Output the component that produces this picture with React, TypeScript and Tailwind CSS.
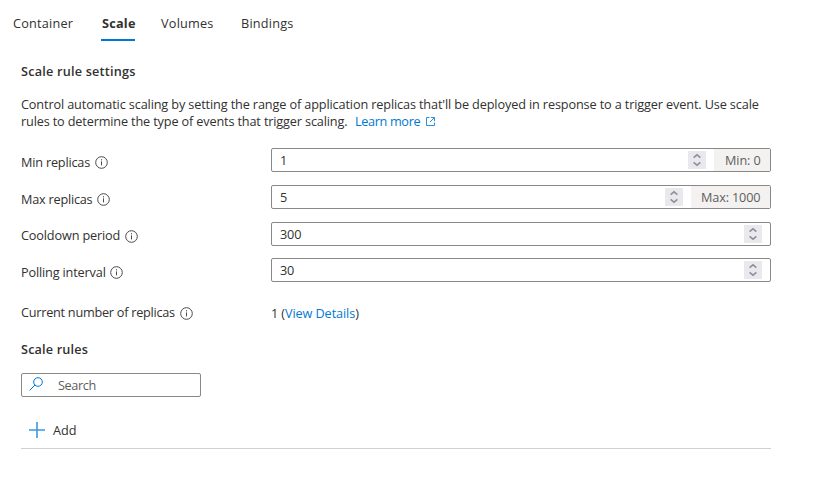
import type { ReactNode } from "react";

function InfoIcon({ className = "" }: { className?: string }) {
  return (
    <svg className={`h-[13px] w-[13px] shrink-0 ${className}`} viewBox="0 0 13 13" fill="none">
      <circle cx="6.5" cy="6.5" r="5.8" stroke="#4a4948" strokeWidth="1" />
      <path d="M6.5 5.4V9.4M6.5 3.2V4.4" stroke="#4a4948" strokeWidth="1" />
    </svg>
  );
}

function Spinner() {
  return (
    <svg className="h-[18px] w-[18px] shrink-0 bg-[#e9e9ed]" viewBox="0 0 18 18" fill="none">
      <path d="M5.6 6.7L9 3.9L12.4 6.7M5.6 11.3L9 14.1L12.4 11.3" stroke="#8f8f9d" strokeWidth="1.6" />
    </svg>
  );
}

type FieldProps = {
  label: string;
  labelClass: string;
  value: string;
  suffix?: ReactNode;
  gap?: string;
};

function Field({ label, labelClass, value, suffix, gap = "mb-[13px]" }: FieldProps) {
  return (
    <div className={`flex h-6 ${gap}`}>
      <div className="flex w-[250px] items-center pt-[5px]">
        <span className={`whitespace-nowrap ${labelClass}`}>{label}</span>
        <InfoIcon />
      </div>
      <div className="flex h-6 w-[500px] items-center rounded-[2px] border border-[#8a8886] pl-2">
        <span className="flex-1 pt-px tracking-[-0.15px]">{value}</span>
        <Spinner />
        {suffix ?? <span className="w-2" />}
      </div>
    </div>
  );
}

export default function App() {
  return (
    <main className="h-[485px] w-[821px] overflow-hidden bg-white font-['Open_Sans','Noto_Sans',sans-serif] text-[12.7px] leading-[17px] text-[#323130]">
      <nav className="flex h-[41px] pt-[15px] pl-[13px] tracking-[0.22px]">
        <div className="w-[88px]">Container</div>
        <div className="mr-[26px] h-[26px] w-[34px] border-b-2 border-[#0078d4] pl-px font-bold">Scale</div>
        <div className="w-20">Volumes</div>
        <div>Bindings</div>
      </nav>
      <section className="ml-[21px] w-[750px]">
        <h2 className="mt-[22px] font-semibold tracking-[0.2px]">Scale rule settings</h2>
        <p className="mt-4 whitespace-nowrap tracking-[-0.13px]">
          Control automatic scaling by setting the range of application replicas that'll be deployed in response to a trigger event. Use scale
        </p>
        <div className="flex items-center whitespace-nowrap">
          <span className="w-[334px] tracking-[-0.15px]">rules to determine the type of events that trigger scaling.</span>
          <a className="w-[71px] tracking-[-0.35px] text-[#0078d4]">Learn more</a>
          <svg className="h-[9px] w-[9px]" viewBox="0 0 9 9" fill="none" stroke="#2b8fdc">
            <path d="M3.5 .5H.5V8.5H8.5V5.5M5 .5H8.5V4M8.5 .5L4 5" />
          </svg>
        </div>
        <div className="mt-[18px]">
          <Field label="Min replicas" labelClass="w-[74px] tracking-[-0.19px]" value="1" suffix={<span className="ml-2 flex h-[22px] w-14 items-center bg-[#f3f2f1] pl-[11px] tracking-[-0.1px] text-[#605e5c]">Min: 0</span>} />
          <Field label="Max replicas" labelClass="w-[76px] tracking-[-0.22px]" value="5" suffix={<span className="ml-2 flex h-[22px] w-[79px] items-center bg-[#f3f2f1] pl-[10px] tracking-[-0.15px] text-[#605e5c]">Max: 1000</span>} />
          <Field label="Cooldown period" labelClass="w-[104px] -mt-[2px] tracking-[-0.15px]" value="300" gap="mb-3" />
          <Field label="Polling interval" labelClass="w-[89px] tracking-[-0.16px]" value="30" gap="mb-[22px]" />
        </div>
        <div className="flex h-[18px] items-center">
          <span className="-mt-[2px] w-[159px] whitespace-nowrap tracking-[-0.25px]">Current number of replicas</span>
          <InfoIcon className="mt-px" />
          <span className="ml-[78px] whitespace-nowrap tracking-[-0.1px]">1 (<a className="text-[#0078d4]">View Details</a>)</span>
        </div>
        <h2 className="mt-[19px] font-semibold tracking-[0.15px]">Scale rules</h2>
        <div className="mt-[15px] flex h-6 w-[180px] items-center rounded-[2px] border border-[#8a8886] pl-[7px] text-[#605e5c]">
          <svg className="mr-[15px] mb-[2px] h-[14px] w-[14px]" viewBox="0 0 14 14" fill="none" stroke="#0078d4">
            <circle cx="9" cy="5" r="4.3" />
            <path d="M6 8L.5 13.5" />
          </svg>
          <span className="tracking-[-0.4px]">Search</span>
        </div>
        <div className="mt-4 flex h-[36px] items-center border-b border-[#d2d0ce] pl-2">
          <svg className="mr-2 mb-px h-4 w-4" viewBox="0 0 16 16" fill="none" stroke="#3d97de" strokeWidth="1.6">
            <path d="M0 8H16M8 0V16" />
          </svg>
          <span>Add</span>
        </div>
      </section>
    </main>
  );
}
